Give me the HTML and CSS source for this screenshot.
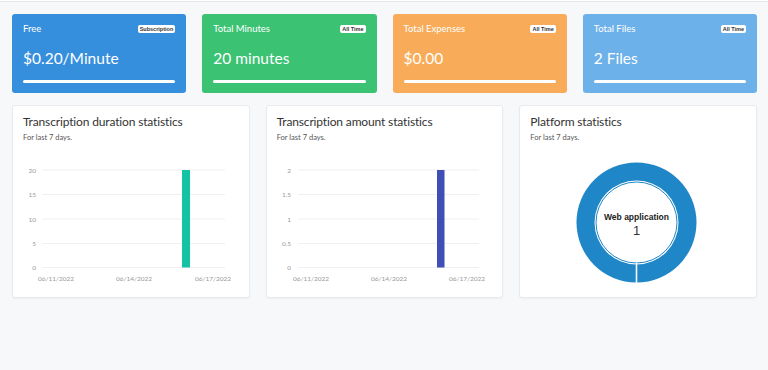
FILE: index.html
```html
<!DOCTYPE html>
<html>

<head>
    <title>Dashboard</title>
    <link rel="stylesheet" href="styles.css">
</head>

<body>
    <div class="topbar"></div>

    <div class="content">
        <div class="stats">
            <div class="stat stat-blue">
                <div class="stat-head">
                    <span>Free</span>
                    <span class="badge">Subscription</span>
                </div>
                <div class="stat-value">$0.20/Minute</div>
                <div class="stat-bar"></div>
            </div>
            <div class="stat stat-green">
                <div class="stat-head">
                    <span>Total Minutes</span>
                    <span class="badge">All Time</span>
                </div>
                <div class="stat-value">20 minutes</div>
                <div class="stat-bar"></div>
            </div>
            <div class="stat stat-orange">
                <div class="stat-head">
                    <span>Total Expenses</span>
                    <span class="badge">All Time</span>
                </div>
                <div class="stat-value">$0.00</div>
                <div class="stat-bar"></div>
            </div>
            <div class="stat stat-light">
                <div class="stat-head">
                    <span>Total Files</span>
                    <span class="badge">All Time</span>
                </div>
                <div class="stat-value">2 Files</div>
                <div class="stat-bar"></div>
            </div>
        </div>

        <div class="charts">
            <div class="card">
                <h3 class="card-title">Transcription duration statistics</h3>
                <p class="card-sub">For last 7 days.</p>
                <svg class="chart" width="215" height="140" viewBox="0 0 215 140">
                    <g class="grid">
                        <line x1="19" y1="20" x2="202" y2="20" />
                        <line x1="19" y1="44.5" x2="202" y2="44.5" />
                        <line x1="19" y1="69" x2="202" y2="69" />
                        <line x1="19" y1="93.5" x2="202" y2="93.5" />
                        <line x1="19" y1="117.5" x2="202" y2="117.5" />
                    </g>
                    <g class="ylabels">
                        <text x="13" y="22.5">20</text>
                        <text x="13" y="47">15</text>
                        <text x="13" y="71.5">10</text>
                        <text x="13" y="96">5</text>
                        <text x="13" y="120">0</text>
                    </g>
                    <g class="xlabels">
                        <text x="33" y="130.5">06/11/2022</text>
                        <text x="111" y="130.5">06/14/2022</text>
                        <text x="190" y="130.5">06/17/2022</text>
                    </g>
                    <rect class="bar-teal" x="159" y="20" width="8" height="97.5" />
                </svg>
            </div>

            <div class="card">
                <h3 class="card-title">Transcription amount statistics</h3>
                <p class="card-sub">For last 7 days.</p>
                <svg class="chart" width="215" height="140" viewBox="0 0 215 140">
                    <g class="grid">
                        <line x1="21" y1="20" x2="202" y2="20" />
                        <line x1="21" y1="44.5" x2="202" y2="44.5" />
                        <line x1="21" y1="69" x2="202" y2="69" />
                        <line x1="21" y1="93.5" x2="202" y2="93.5" />
                        <line x1="21" y1="117.5" x2="202" y2="117.5" />
                    </g>
                    <g class="ylabels">
                        <text x="14" y="22.5">2</text>
                        <text x="14" y="47">1.5</text>
                        <text x="14" y="71.5">1</text>
                        <text x="14" y="96">0.5</text>
                        <text x="14" y="120">0</text>
                    </g>
                    <g class="xlabels">
                        <text x="34" y="130.5">06/11/2022</text>
                        <text x="112" y="130.5">06/14/2022</text>
                        <text x="190" y="130.5">06/17/2022</text>
                    </g>
                    <rect class="bar-indigo" x="160" y="20" width="7.5" height="97.5" />
                </svg>
            </div>

            <div class="card">
                <h3 class="card-title">Platform statistics</h3>
                <p class="card-sub">For last 7 days.</p>
                <svg class="chart" width="215" height="140" viewBox="0 0 215 140">
                    <circle class="donut" cx="106.5" cy="72.5" r="60" />
                    <circle cx="106.5" cy="72.5" r="42" fill="#fff" />
                    <circle cx="106.5" cy="72.5" r="40.5" fill="#fff" stroke="#1f86c8" stroke-width="1" />
                    <line x1="106.5" y1="113" x2="106.5" y2="133" stroke="#fff" stroke-width="1.6" />
                    <text class="donut-label" x="106.5" y="70">Web application</text>
                    <text class="donut-value" x="106.5" y="85">1</text>
                </svg>
            </div>
        </div>
    </div>
</body>

</html>
```

FILE: styles.css
```css
body {
    margin: 0;
    background: #f7f8fa;
    font-family: Lato, "Noto Sans", sans-serif;
    color: #333;
    height: 370px;
}

.topbar {
    height: 1px;
    background: #fff;
    border-bottom: 1px solid #e4e6ea;
}

.content {
    padding: 12px 11px 0 12px;
}

/* top counters */

.stats {
    display: grid;
    grid-template-columns: repeat(4, 1fr);
    gap: 16px;
}

.stat {
    border-radius: 3px;
    padding: 9px 11px 10px 11px;
    color: #fff;
    height: 60px;
}

.stat-blue {
    background: #368fdc;
}

.stat-green {
    background: #3bc273;
}

.stat-orange {
    background: #f8ac59;
}

.stat-light {
    background: #6cb1ea;
}

.stat-head {
    display: flex;
    justify-content: space-between;
    align-items: center;
    font-size: 9.5px;
    line-height: 12px;
}

.badge {
    background: #fff;
    color: #333;
    font-family: "Liberation Sans", sans-serif;
    font-weight: bold;
    font-size: 5.5px;
    line-height: 8px;
    padding: 0 2px;
    border-radius: 2px;
}

.stat-value {
    font-size: 15.5px;
    line-height: 22px;
    margin-top: 12px;
}

.stat-bar {
    height: 3px;
    background: #fff;
    border-radius: 2px;
    margin-top: 11px;
}

/* chart cards */

.charts {
    display: grid;
    grid-template-columns: repeat(3, 1fr);
    gap: 16px;
    margin-top: 12px;
}

.card {
    background: #fff;
    border: 1px solid #e8eaee;
    border-radius: 3px;
    box-shadow: 0 1px 2px rgba(0, 0, 0, 0.04);
    padding: 8px 10px 7px 10px;
}

.card-title {
    margin: 0;
    font-size: 12px;
    letter-spacing: -0.15px;
    line-height: 16px;
    font-weight: normal;
    color: #333;
}

.card-sub {
    margin: 3px 0 0 0;
    font-size: 7.5px;
    line-height: 10px;
    color: #555;
}

.chart {
    display: block;
    margin-top: 7px;
}

.grid line {
    stroke: #f0f0f2;
    stroke-width: 1;
}

.ylabels text {
    font-size: 6.5px;
    fill: #999;
    text-anchor: end;
}

.xlabels text {
    font-size: 6.5px;
    fill: #999;
    text-anchor: middle;
}

.bar-teal {
    fill: #14c3a4;
}

.bar-indigo {
    fill: #3f4fb5;
}

.donut {
    fill: #1f86c8;
}

.donut-label {
    font-family: "Liberation Sans", sans-serif;
    font-weight: bold;
    font-size: 8.5px;
    fill: #222;
    text-anchor: middle;
}

.donut-value {
    font-family: "Liberation Sans", sans-serif;
    font-size: 13px;
    fill: #333;
    text-anchor: middle;
}
```
